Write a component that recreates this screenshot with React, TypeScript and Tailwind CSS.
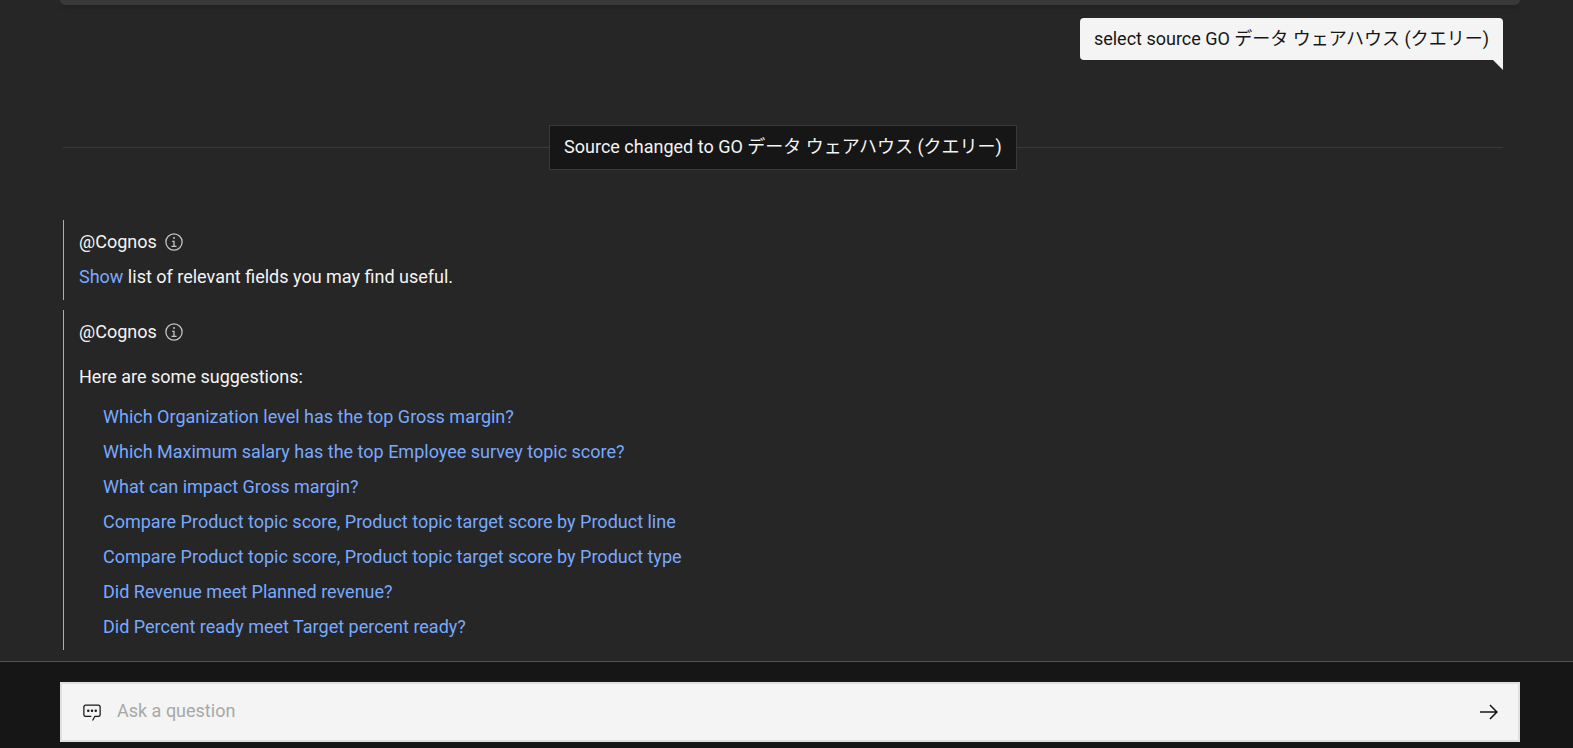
import React from "react";

const sourceName = "GO データ ウェアハウス (クエリー)";

const suggestions = [
  "Which Organization level has the top Gross margin?",
  "Which Maximum salary has the top Employee survey topic score?",
  "What can impact Gross margin?",
  "Compare Product topic score, Product topic target score by Product line",
  "Compare Product topic score, Product topic target score by Product type",
  "Did Revenue meet Planned revenue?",
  "Did Percent ready meet Target percent ready?",
];

function InfoIcon() {
  return (
    <svg viewBox="0 0 32 32" className="size-5" fill="currentColor" aria-hidden="true">
      <path d="M17 22v-8h-4v2h2v6h-3v2h8v-2zM16 8a1.5 1.5 0 1 0 1.5 1.5A1.5 1.5 0 0 0 16 8z" />
      <path d="M16 30a14 14 0 1 1 14-14 14 14 0 0 1-14 14zm0-26a12 12 0 1 0 12 12A12 12 0 0 0 16 4z" />
    </svg>
  );
}

function ChatIcon() {
  return (
    <svg viewBox="0 0 32 32" className="size-5 shrink-0" fill="currentColor" aria-hidden="true">
      <path d="M17.74 30 16 29l4-7h6a2 2 0 0 0 2-2V8a2 2 0 0 0-2-2H6a2 2 0 0 0-2 2v12a2 2 0 0 0 2 2h9v2H6a4 4 0 0 1-4-4V8a4 4 0 0 1 4-4h20a4 4 0 0 1 4 4v12a4 4 0 0 1-4 4h-4.84z" />
      <circle cx="10" cy="14" r="2" />
      <circle cx="16" cy="14" r="2" />
      <circle cx="22" cy="14" r="2" />
    </svg>
  );
}

function ArrowIcon() {
  return (
    <svg viewBox="0 0 32 32" className="size-6" fill="currentColor" aria-hidden="true">
      <path d="m18 6-1.430 1.393L24.150 15H4v2h20.150l-7.580 7.573L18 26l10-10z" />
    </svg>
  );
}

function Message({ children }: { children: React.ReactNode }) {
  return (
    <article className="border-l border-[#be95ff] pt-1 pb-[6px] pl-[15px]">
      <header className="flex items-center gap-[7px]">
        <span>@Cognos</span>
        <button type="button" aria-label="About this answer" className="text-[#c6c6c6]">
          <InfoIcon />
        </button>
      </header>
      {children}
    </article>
  );
}

export default function App() {
  return (
    <div className="flex min-h-screen flex-col bg-[#262626] font-['Roboto','Noto_Sans_CJK_JP',sans-serif] text-[18px] leading-[35px] text-[#f4f4f4]">
      <div className="mr-[53px] ml-[60px] h-[5px] rounded-b-md bg-[#393939] shadow-md" />
      <main className="flex grow flex-col pr-[70px] pl-[63px]">
        <div className="mt-[13px] self-end">
          <p className="rounded-t-[4px] rounded-bl-[4px] bg-[#f4f4f4] px-[14px] py-2 leading-[26px] text-[#161616]">
            select source {sourceName}
          </p>
          <svg viewBox="0 0 10 10" className="ml-auto size-[10px]" aria-hidden="true">
            <path d="M0 0h10v10z" fill="#f4f4f4" />
          </svg>
        </div>
        <div className="mt-[55px] flex items-center">
          <span className="h-px grow bg-[#393939]" />
          <p className="border border-[#393939] bg-[#161616] px-[14px] pt-[7px] pb-[9px] leading-[27px]">
            Source changed to {sourceName}
          </p>
          <span className="h-px grow bg-[#393939]" />
        </div>
        <section className="mt-[50px] flex flex-col gap-[10px]">
          <Message>
            <p>
              <a href="#fields" className="text-[#78a9ff]">Show</a> list of relevant fields you may find useful.
            </p>
          </Message>
          <Message>
            <p className="mt-[10px] mb-[5px]">Here are some suggestions:</p>
            <ul className="pl-6">
              {suggestions.map((s) => (
                <li key={s}>
                  <a href="#ask" className="text-[#78a9ff]">{s}</a>
                </li>
              ))}
            </ul>
          </Message>
        </section>
      </main>
      <footer className="mt-[11px] border-t border-[#525252] bg-[#161616] pt-5 pr-[53px] pb-[6px] pl-[60px]">
        <form className="flex h-[60px] items-center border-2 border-[#e0e0e0] bg-[#f4f4f4] pr-[17px] pl-5 text-[#161616]">
          <ChatIcon />
          <input
            type="text"
            aria-label="Ask a question"
            placeholder="Ask a question"
            className="ml-[15px] min-w-0 grow bg-transparent pb-[3px] outline-none placeholder:text-[#a8a8a8]"
          />
          <button type="submit" aria-label="Send">
            <ArrowIcon />
          </button>
        </form>
      </footer>
    </div>
  );
}
